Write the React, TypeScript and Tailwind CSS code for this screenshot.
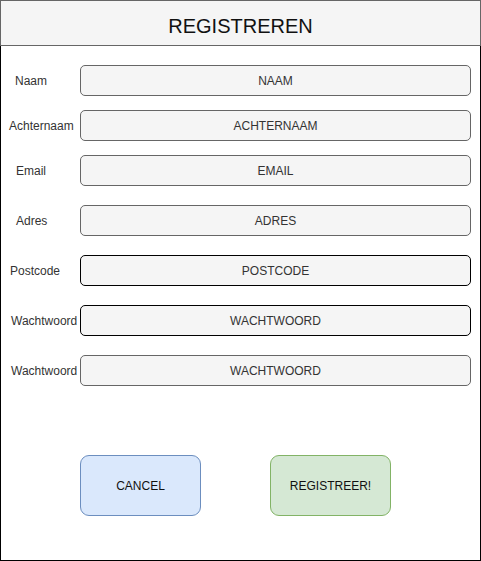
import React from "react";

const fields = [
  { label: "Naam", placeholder: "NAAM", pad: "pl-[14px]", mt: "mt-[19px]", dark: false },
  { label: "Achternaam", placeholder: "ACHTERNAAM", pad: "pl-[8px]", mt: "mt-[14px]", dark: false },
  { label: "Email", placeholder: "EMAIL", pad: "pl-[15px]", mt: "mt-[14px]", dark: false },
  { label: "Adres", placeholder: "ADRES", pad: "pl-[15px]", mt: "mt-[19px]", dark: false },
  { label: "Postcode", placeholder: "POSTCODE", pad: "pl-[9px]", mt: "mt-[19px]", dark: true },
  { label: "Wachtwoord", placeholder: "WACHTWOORD", pad: "pl-[10px]", mt: "mt-[19px]", dark: true },
  { label: "Wachtwoord", placeholder: "WACHTWOORD", pad: "pl-[10px]", mt: "mt-[19px]", dark: false },
];

const App: React.FC = () => {
  return (
    <div className="w-[481px] h-[561px] bg-white font-['Liberation_Sans',Arial,sans-serif] text-[12px] text-[#333]">
      <div className="h-[46px] bg-[#f5f5f5] border border-[#666] flex items-center justify-center pt-[6px]">
        <h1 className="text-[20px] text-[#111]">REGISTREREN</h1>
      </div>
      <div className="h-[515px] border-l border-r border-b border-black flex flex-col">
        {fields.map((f, i) => (
          <div key={i} className={`flex items-center h-[31px] ${f.mt}`}>
            <div className={`w-[79px] ${f.pad} whitespace-nowrap`}>{f.label}</div>
            <div
              className={`w-[391px] h-[31px] rounded-[5px] bg-[#f5f5f5] border flex items-center justify-center ${
                f.dark ? "border-black" : "border-[#666]"
              }`}
            >
              {f.placeholder}
            </div>
          </div>
        ))}
        <div className="flex mt-[69px] pl-[79px] gap-[69px]">
          <button className="w-[121px] h-[61px] rounded-[9px] bg-[#dae8fc] border border-[#6c8ebf] text-[#111]">
            CANCEL
          </button>
          <button className="w-[121px] h-[61px] rounded-[9px] bg-[#d5e8d4] border border-[#82b366] text-[#111]">
            REGISTREER!
          </button>
        </div>
      </div>
    </div>
  );
};

export default App;
